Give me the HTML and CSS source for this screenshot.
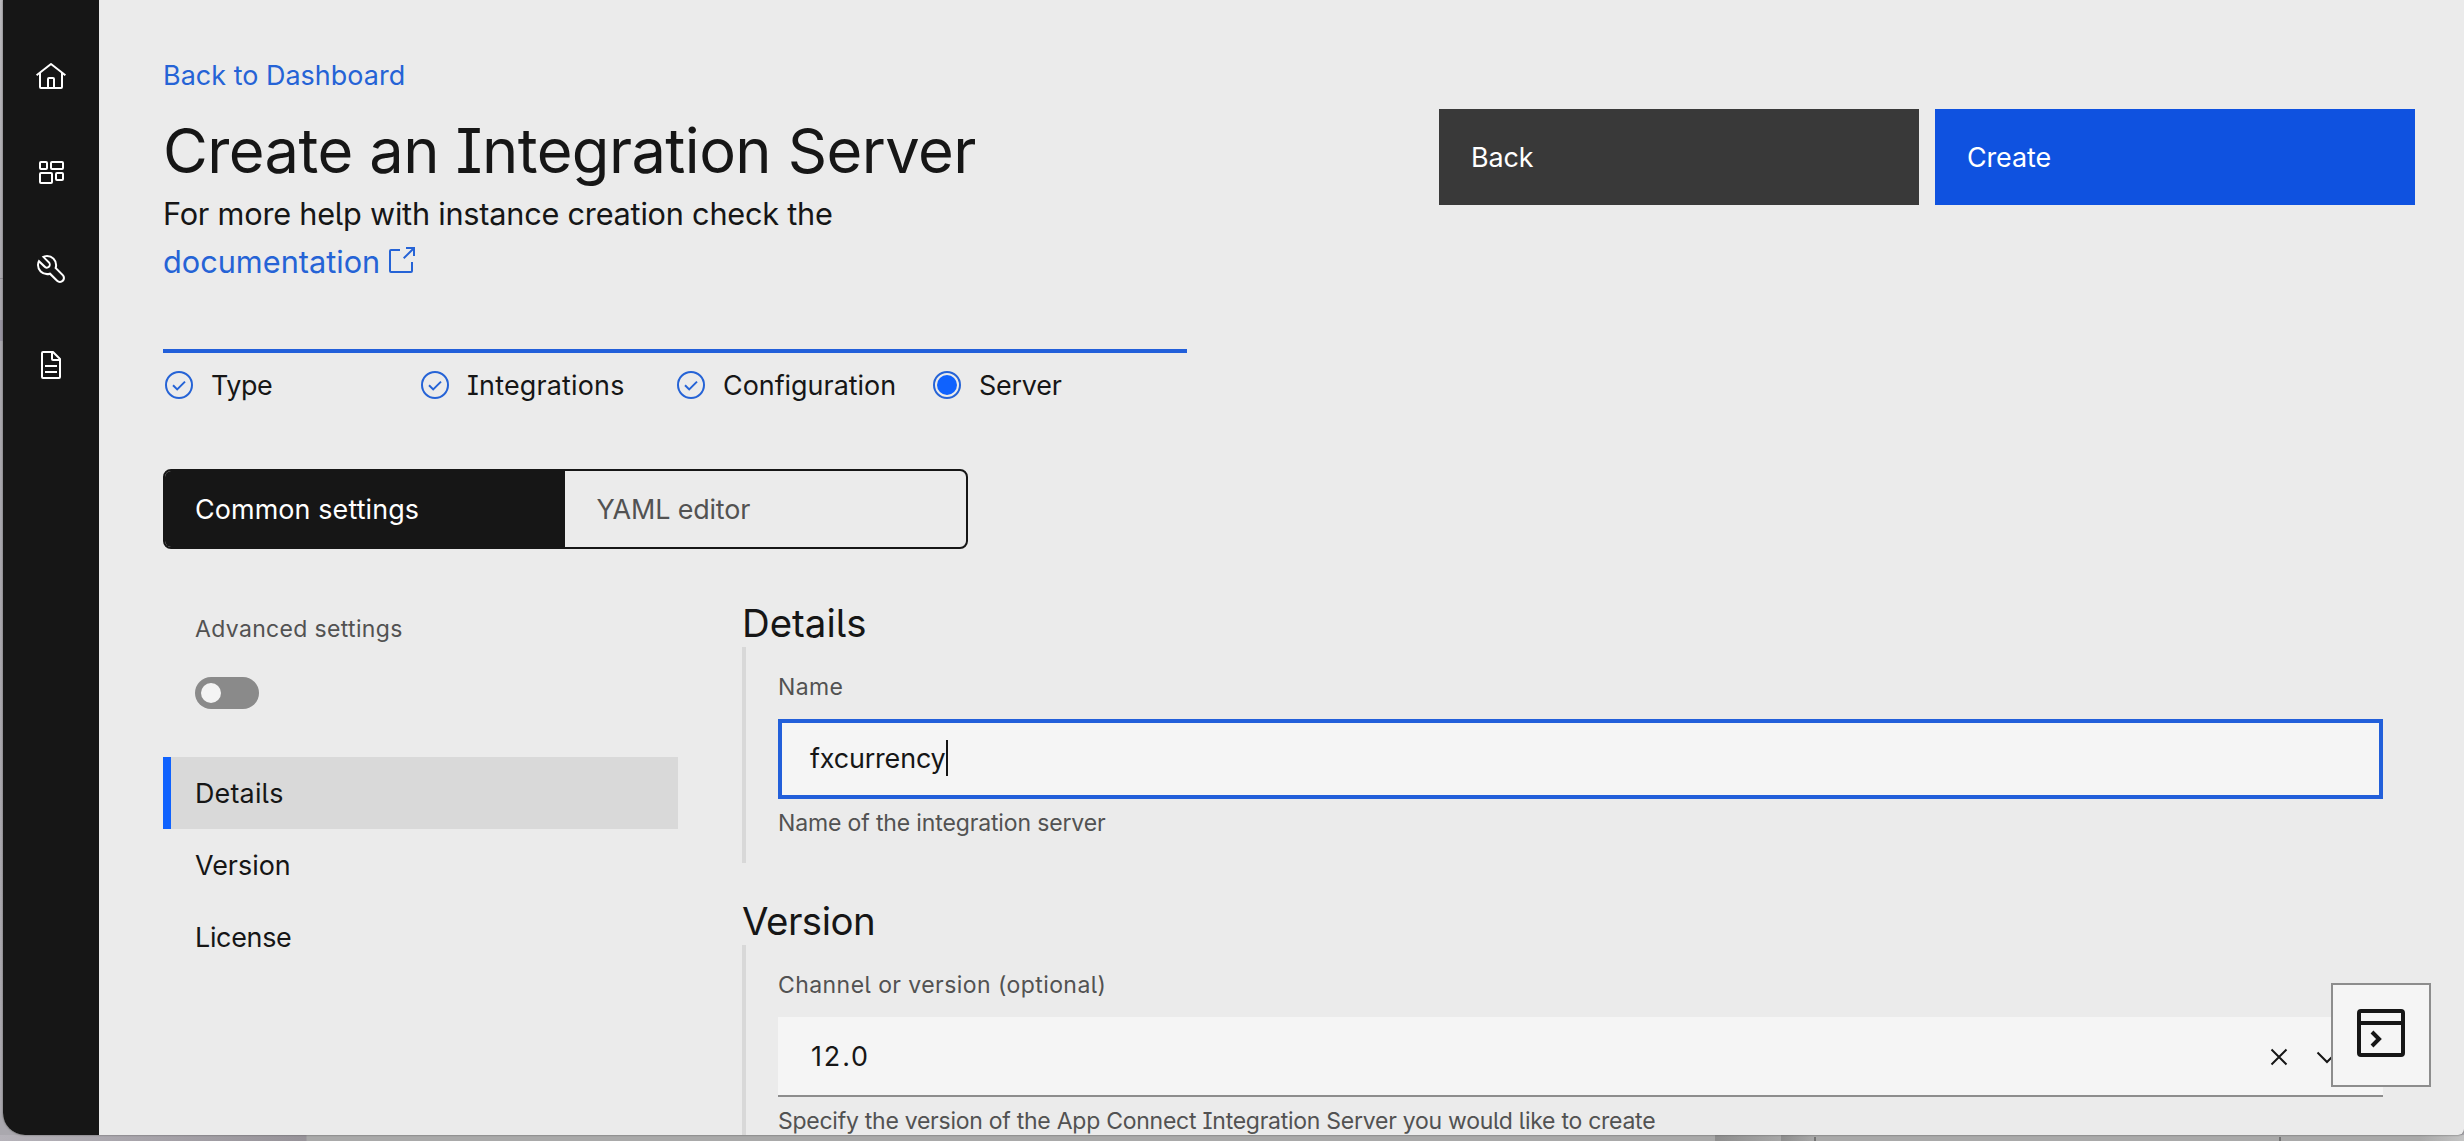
FILE: index.html
```
<!DOCTYPE html>
<html lang="en">
<head>
<meta charset="utf-8">
<title>Create an Integration Server</title>
<link rel="stylesheet" href="styles.css">
</head>
<body>
<div class="window">
  <nav class="rail">
    <svg class="icon32" viewBox="0 0 32 32"><path d="M16.61,2.21a1,1,0,0,0-1.24,0L1,13.42,2.24,15,4,13.62V26a2,2,0,0,0,2,2H26a2,2,0,0,0,2-2V13.63L29.76,15,31,13.43ZM18,26H14V18h4Zm2,0V18a2,2,0,0,0-2-2H14a2,2,0,0,0-2,2v8H6V12.06L16,4.27l10,7.8V26Z"/></svg>
    <svg class="icon32 outline" viewBox="0 0 32 32"><rect x="5" y="5" width="7" height="7" rx="1"/><rect x="16" y="5" width="12" height="7" rx="1"/><rect x="5" y="16" width="12" height="10" rx="1"/><rect x="21" y="16" width="7" height="7" rx="1"/></svg>
    <svg class="icon32" viewBox="0 0 32 32"><path d="M12.1 2a9.8 9.8 0 00-5.4 1.6l6.4 6.4a2.1 2.1 0 01.2 3 2.1 2.1 0 01-3-.2L3.7 6.4A9.84 9.84 0 002 12.1a10.14 10.14 0 0010.1 10.1 10.9 10.9 0 002.6-.3l6.7 6.7a5 5 0 007.1-7.1l-6.7-6.7a10.9 10.9 0 00.3-2.6A10 10 0 0012.1 2zm8 10.1a7.61 7.61 0 01-.3 2.1l-.3 1.1.8.8 6.7 6.7a2.88 2.88 0 01.9 2.1A2.72 2.72 0 0127 27a2.9 2.9 0 01-4.2 0l-6.7-6.7-.8-.8-1.1.3a7.61 7.61 0 01-2.1.3 8.27 8.27 0 01-5.7-2.3A7.63 7.63 0 014 12.1a8.33 8.33 0 01.3-2.2l4.4 4.4a4.14 4.14 0 005.9.2 4.14 4.14 0 00-.2-5.9L10 4.2a6.45 6.45 0 012-.3 8.27 8.27 0 015.7 2.3 8.49 8.49 0 012.4 5.9z"/></svg>
    <svg class="icon32" viewBox="0 0 32 32"><path d="M25.7,9.3l-7-7A.908.908,0,0,0,18,2H8A2.006,2.006,0,0,0,6,4V28a2.006,2.006,0,0,0,2,2H24a2.006,2.006,0,0,0,2-2V10A.908.908,0,0,0,25.7,9.3ZM18,4.4,23.6,10H18ZM24,28H8V4h8v6a2.006,2.006,0,0,0,2,2h6Z"/><path d="M10 22h12v2H10zM10 16h12v2H10z"/></svg>
  </nav>

  <main class="page">
    <header class="header">
      <div>
        <a class="crumb">Back to Dashboard</a>
        <h1 class="title">Create an Integration Server</h1>
        <p class="intro"><span class="intro-text">For more help with instance creation check the</span><br><a class="doc-link">documentation<svg class="icon32" viewBox="0 0 32 32"><path d="M26,28H6a2,2,0,0,1-2-2V6A2,2,0,0,1,6,4h9V6H6V26H26V17h2v9A2,2,0,0,1,26,28Z"/><path d="M21,2V4h5.6L18,12.6,19.4,14,28,5.4V11h2V2Z"/></svg></a></p>
      </div>
      <div class="actions">
        <button class="btn btn-back">Back</button>
        <button class="btn btn-create">Create</button>
      </div>
    </header>

    <ol class="steps">
      <li><svg class="icon32" viewBox="0 0 32 32"><circle cx="16" cy="16" r="13"/><path d="M10 16.2l4.2 4.2 7.8-7.8"/></svg><span class="s-type">Type</span></li>
      <li><svg class="icon32" viewBox="0 0 32 32"><circle cx="16" cy="16" r="13"/><path d="M10 16.2l4.2 4.2 7.8-7.8"/></svg><span class="s-int">Integrations</span></li>
      <li><svg class="icon32" viewBox="0 0 32 32"><circle cx="16" cy="16" r="13"/><path d="M10 16.2l4.2 4.2 7.8-7.8"/></svg><span>Configuration</span></li>
      <li><svg class="icon32" viewBox="0 0 32 32"><circle cx="16" cy="16" r="13"/><circle class="dot" cx="16" cy="16" r="10"/></svg><span class="s-server">Server</span></li>
    </ol>

    <div class="switcher">
      <div class="switch-tab selected">Common settings</div>
      <div class="switch-tab">YAML editor</div>
    </div>

    <div class="columns">
      <aside class="side">
        <div class="side-label">Advanced settings</div>
        <div class="toggle"></div>
        <ul class="side-nav">
          <li class="current">Details</li>
          <li>Version</li>
          <li class="license">License</li>
        </ul>
      </aside>
      <div class="form">
        <section class="group">
          <h2 class="group-title">Details</h2>
          <div class="group-body">
            <div class="label">Name</div>
            <div class="field focused"><span class="typed">fxcurrency</span><span class="caret"></span></div>
            <div class="helper">Name of the integration server</div>
          </div>
        </section>
        <section class="group">
          <h2 class="group-title t-version">Version</h2>
          <div class="group-body">
            <div class="label label-wide">Channel or version (optional)</div>
            <div class="field select"><span class="value">12.0</span>
              <svg class="icon32" viewBox="0 0 32 32"><path d="M8.5 8.5l15 15M23.5 8.5l-15 15"/></svg>
              <svg class="icon32" viewBox="0 0 32 32"><path d="M6.5 11.5l9.5 9.5 9.5-9.5"/></svg>
            </div>
            <div class="helper h-version">Specify the version of the App Connect Integration Server you would like to create</div>
          </div>
        </section>
      </div>
    </div>
  </main>
</div>
<button class="terminal"><svg viewBox="0 0 48 48"><rect x="2" y="2" width="44" height="44" rx="2"/><path d="M2 14h44"/><path d="M15 23l7 7-7 7"/></svg></button>
</body>
</html>
```
FILE: styles.css
```
* { box-sizing: border-box; margin: 0; padding: 0; }

body {
  height: 1141px;
  overflow: hidden;
  background:
    linear-gradient(#747474, #747474) 1814px 1137px / 2px 4px no-repeat,
    linear-gradient(#747474, #747474) 2279px 1137px / 2px 4px no-repeat,
    linear-gradient(90deg, #8d8d8d, #a8a8a8) 1715px 1135px / 66px 6px no-repeat,
    linear-gradient(90deg, #8d8d8d, #a8a8a8) 1781px 1135px / 33px 6px no-repeat,
    linear-gradient(90deg, transparent 2420px, #c4c4c4 2464px) 0 1135px / 100% 6px no-repeat,
    linear-gradient(90deg, #b5b2b9, #979399 306px, #a9a9a9 307px) 0 1135px / 100% 6px no-repeat,
    linear-gradient(#8e8b92, #8e8b92) 0 278px / 3px 1px no-repeat,
    linear-gradient(#9793a0, #9793a0) 0 320px / 3px 21px no-repeat,
    linear-gradient(#bab9bd, #a9a7ad 300px, #aaa8ae);
  color: #161616;
  font-family: Inter, Roboto, sans-serif;
  font-size: 26.9px;
  font-feature-settings: "cv08", "cv05";
  line-height: 40px;
}

.window {
  display: grid;
  grid-template-columns: 96px 1fr;
  height: 1135px;
  margin-left: 3px;
  overflow: hidden;
  background: #ebebeb;
  border-radius: 0 0 6px 22px;
  box-shadow: 0 0 2px #555;
}

.icon32 { width: 32px; height: 32px; flex: none; }

.rail {
  display: flex;
  flex-direction: column;
  align-items: center;
  gap: 64px;
  padding-top: 61px;
  background: #161616;
}
.rail svg { fill: #fff; }
.rail .outline { fill: none; stroke: #fff; stroke-width: 2; }

.page { padding: 55px 49px 0 64px; }

.header { display: flex; justify-content: space-between; }
.crumb { display: block; margin-bottom: 17px; color: #2563d6; letter-spacing: .05px; }
.title { font-size: 61.4px; font-weight: 400; line-height: 78px; letter-spacing: -.58px; }
.intro { font-size: 30.7px; line-height: 48px; }
.intro-text { letter-spacing: -.23px; }
.doc-link { display: inline-flex; height: 48px; color: #2563d6; vertical-align: top; }
.doc-link svg { margin: 7px 0 0 5px; fill: #2563d6; }

.actions { display: flex; gap: 16px; padding-top: 54px; }
.btn {
  width: 480px;
  height: 96px;
  padding: 0 32px;
  border: 0;
  color: #fff;
  font: inherit;
  text-align: left;
  letter-spacing: -.1px;
}
.btn-back { background: #393939; }
.btn-create { background: #0f52e0; }

.steps {
  display: grid;
  grid-template-columns: repeat(4, 256px);
  width: 1024px;
  margin-top: 63px;
  padding-top: 12px;
  border-top: 4px solid #225fda;
  list-style: none;
}
.steps li { display: flex; align-items: center; gap: 16px; }
.steps svg { fill: none; stroke: #2563d6; stroke-width: 2; }
.steps .dot { fill: #0f62fe; stroke: none; }
.s-type { letter-spacing: -.4px; }
.s-int { letter-spacing: .2px; }
.s-server { letter-spacing: -.2px; }

.switcher {
  display: flex;
  width: 805px;
  height: 80px;
  margin-top: 64px;
  overflow: hidden;
  border: 2px solid #161616;
  border-radius: 8px;
}
.switch-tab { flex: 1; padding: 18px 30px; color: #525252; letter-spacing: -.15px; }
.switch-tab.selected { background: #161616; color: #fff; letter-spacing: .12px; }
.switch-tab:last-child { padding-left: 32px; }

.columns { display: grid; grid-template-columns: 515px 1fr; gap: 64px; margin-top: 50px; }

.side { padding-top: 14px; }
.side-label { padding-left: 32px; color: #525252; font-size: 23px; line-height: 32px; letter-spacing: .34px; }
.toggle { width: 64px; height: 32px; margin: 32px 0 48px 32px; padding: 6px; border-radius: 16px; background: #8a8a8a; }
.toggle::before { content: ""; display: block; width: 20px; height: 20px; border-radius: 50%; background: #f4f4f4; }
.side-nav { list-style: none; }
.side-nav li { height: 72px; padding: 16px 32px; letter-spacing: 0; }
.side-nav .current { padding-left: 24px; border-left: 8px solid #0f62fe; background: #d9d9d9; letter-spacing: .2px; }
.side-nav .license { letter-spacing: -.3px; }

.form { margin-right: 32px; }
.group { margin-bottom: 34px; }
.group-title { font-size: 38.4px; font-weight: 400; line-height: 48px; }
.t-version { letter-spacing: -.5px; }
.group-body { padding: 24px 0 24px 32px; border-left: 4px solid #d8d8d8; }
.label, .helper { color: #525252; font-size: 23px; line-height: 32px; letter-spacing: .4px; }
.label-wide { letter-spacing: .43px; }
.helper { margin-top: 8px; letter-spacing: -.14px; white-space: nowrap; }
.h-version { letter-spacing: -.26px; }
.field { display: flex; align-items: center; height: 80px; margin-top: 16px; padding: 0 32px; background: #f5f5f5; }
.focused { padding: 0 28px 2px; border: 4px solid #225fda; }
.typed { letter-spacing: -.15px; }
.caret { width: 2px; height: 36px; background: #161616; }
.select { gap: 16px; padding-right: 40px; border-bottom: 2px solid #8d8d8d; }
.select .value { flex: 1; padding-left: 1px; letter-spacing: 1.9px; }
.select svg { margin-top: 2px; fill: none; stroke: #161616; stroke-width: 2; }

/* Floating shortcut that stays above the form */
.terminal {
  position: absolute;
  left: 2331px;
  top: 983px;
  display: grid;
  place-items: center;
  width: 100px;
  height: 104px;
  padding-bottom: 4px;
  border: 2px solid #8d8d8d;
  background: #f5f5f5;
}
.terminal svg { width: 48px; height: 48px; fill: none; stroke: #161616; stroke-width: 4; }
```
